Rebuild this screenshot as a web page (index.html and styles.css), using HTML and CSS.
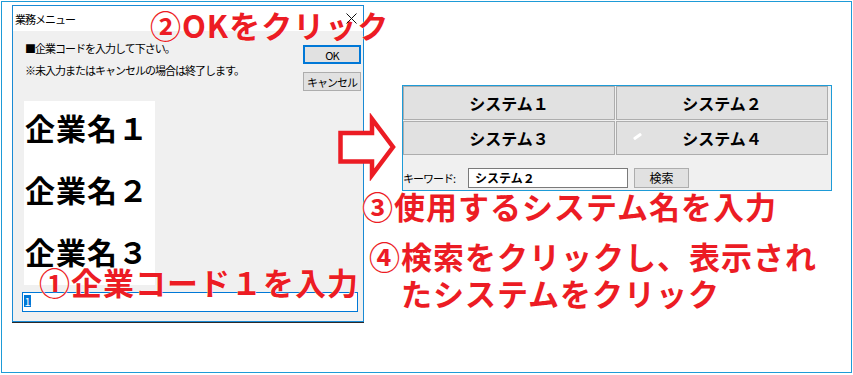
FILE: index.html
```html
<!DOCTYPE html>
<html lang="ja">
<head>
<meta charset="utf-8">
<title>業務メニュー</title>
<link rel="stylesheet" href="styles.css">
</head>
<body>
<div class="frame">
  <div class="dialog">
    <div class="dlg-title">
      <span class="dlg-caption">業務メニュー</span>
      <svg class="close" width="11" height="11" viewBox="0 0 11 11"><path d="M0.5 0.5 L10.5 10.5 M10.5 0.5 L0.5 10.5" stroke="#111" stroke-width="1" fill="none"/></svg>
    </div>
    <div class="dlg-body">
      <div class="dlg-top">
        <div class="dlg-msg">
          <p>■企業コードを入力して下さい。</p>
          <p>※未入力またはキャンセルの場合は終了します。</p>
        </div>
        <div class="dlg-btns">
          <div class="btn btn-ok">OK</div>
          <div class="btn">キャンセル</div>
        </div>
      </div>
      <div class="names">
        <div class="name">企業名１</div>
        <div class="name">企業名２</div>
        <div class="name">企業名３</div>
      </div>
      <div class="code-input"><span class="sel">1</span></div>
    </div>
  </div>

  <div class="panel">
    <div class="sys-grid">
      <div class="sys-btn">システム１</div>
      <div class="sys-btn">システム２</div>
      <div class="sys-btn">システム３</div>
      <div class="sys-btn mark">システム４</div>
    </div>
    <div class="kw-row">
      <span class="kw-label">キーワード:</span>
      <div class="kw-input">システム２</div>
      <div class="kw-btn">検索</div>
    </div>
  </div>

  <svg class="arrow" width="64" height="68" viewBox="0 0 64 68">
    <polygon points="4.5,20 36,20 36,6 57,34 36,62 36,48.5 4.5,48.5" fill="#fff" stroke="#ec1c24" stroke-width="4.5" stroke-linejoin="miter"/>
  </svg>

  <div class="note note-1">①企業コード１を入力</div>
  <div class="note note-2">②OKをクリック</div>
  <div class="note note-3">③使用するシステム名を入力</div>
  <div class="note note-4">④検索をクリックし、表示され<br>たシステムをクリック</div>
</div>
</body>
</html>
```

FILE: styles.css
```css
* {
  box-sizing: border-box;
  margin: 0;
  padding: 0;
}

body {
  margin: 0;
  background: #fff;
  font-family: "Noto Sans CJK JP", "Noto Sans", sans-serif;
  color: #000;
}

.frame {
  position: relative;
  margin: 1px 0 0 1px;
  width: 851px;
  height: 372px;
  border: 1px solid #1e9bd7;
  display: flex;
  align-items: flex-start;
}

/* ---------- dialog ---------- */
.dialog {
  margin: 3px 0 0 10px;
  width: 352px;
  height: 317px;
  border: 1px solid #1a8ad4;
  background: #f0f0f0;
  box-shadow: 0 1px 0 #2a2a2a;
  display: flex;
  flex-direction: column;
}

.dlg-title {
  height: 25px;
  background: #fff;
  display: flex;
  align-items: center;
  padding-left: 2px;
}

.dlg-caption {
  font-size: 11px;
  letter-spacing: -1px;
}

.close {
  position: relative;
  z-index: 2;
  margin-left: auto;
  margin-right: 6px;
}

.dlg-body {
  flex: 1;
  padding: 6px 2px 0 9px;
}

.dlg-top {
  display: flex;
  justify-content: space-between;
  align-items: flex-start;
}

.dlg-msg {
  margin-left: 3px;
}

.dlg-msg p {
  font-size: 11px;
  line-height: 22px;
  letter-spacing: -1px;
}

.dlg-btns {
  margin-top: 8px;
  display: flex;
  flex-direction: column;
  gap: 8px;
}

.btn {
  width: 58px;
  height: 19px;
  background: #e1e1e1;
  border: 1px solid #adadad;
  display: flex;
  align-items: center;
  justify-content: center;
  font-size: 11px;
  letter-spacing: -1px;
}

.btn-ok {
  border: 2px solid #0078d7;
}

.names {
  margin: 10px 0 0 2px;
  width: 131px;
  height: 184px;
  background: #fff;
  padding: 6px 0 0 1px;
}

.name {
  height: 40px;
  line-height: 40px;
  margin-bottom: 22px;
  font-size: 30px;
  font-weight: 700;
  letter-spacing: 1px;
  white-space: nowrap;
}

.code-input {
  margin-top: 7px;
  width: 336px;
  height: 20px;
  border: 1px solid #0078d7;
  background: #fff;
  padding: 2px 0 0 1px;
}

.sel {
  display: block;
  width: 7px;
  height: 12px;
  background: #0078d7;
  color: #fff;
  font-size: 11px;
  line-height: 12px;
  text-align: center;
}

/* ---------- system panel ---------- */
.panel {
  margin: 83px 0 0 38px;
  width: 430px;
  height: 106px;
  border: 1px solid #1e9bd7;
  background: #f0f0f0;
}

.sys-grid {
  display: grid;
  grid-template-columns: 212px 212px;
  grid-template-rows: 34px 34px;
  column-gap: 1px;
  row-gap: 1px;
}

.sys-btn {
  position: relative;
  background: #e1e1e1;
  border: 1px solid #adadad;
  display: flex;
  align-items: center;
  justify-content: center;
  font-size: 16px;
  font-weight: 700;
}

.sys-btn.mark::before {
  content: "";
  position: absolute;
  left: 16px;
  top: 13px;
  width: 9px;
  height: 3px;
  background: #fff;
  transform: rotate(-35deg);
  border-radius: 1px;
}

.kw-row {
  margin-top: 13px;
  display: flex;
  align-items: center;
  height: 20px;
}

.kw-label {
  width: 65px;
  font-size: 11px;
  letter-spacing: -1px;
}

.kw-input {
  width: 160px;
  height: 20px;
  border: 1px solid #7a7a7a;
  background: #fff;
  padding-left: 6px;
  font-size: 12px;
  font-weight: 700;
  line-height: 18px;
}

.kw-btn {
  margin-left: 6px;
  width: 55px;
  height: 20px;
  background: #e1e1e1;
  border: 1px solid #adadad;
  font-size: 12px;
  line-height: 18px;
  text-align: center;
}

/* ---------- overlay annotations ---------- */
.arrow {
  position: absolute;
  left: 334px;
  top: 111px;
}

.note {
  position: absolute;
  color: #ec1c24;
  font-size: 31px;
  font-weight: 700;
  line-height: 36px;
  letter-spacing: 1px;
  white-space: nowrap;
  text-shadow: 0 0 1px #fff, 0 0 1px #fff;
}

.note-1 {
  left: 37px;
  top: 262px;
}

.note-2 {
  left: 148px;
  top: 5px;
}

.note-3 {
  left: 360px;
  top: 186px;
}

.note-4 {
  left: 367px;
  top: 235px;
  line-height: 37px;
  padding-left: 32px;
  text-indent: -32px;
}
```
